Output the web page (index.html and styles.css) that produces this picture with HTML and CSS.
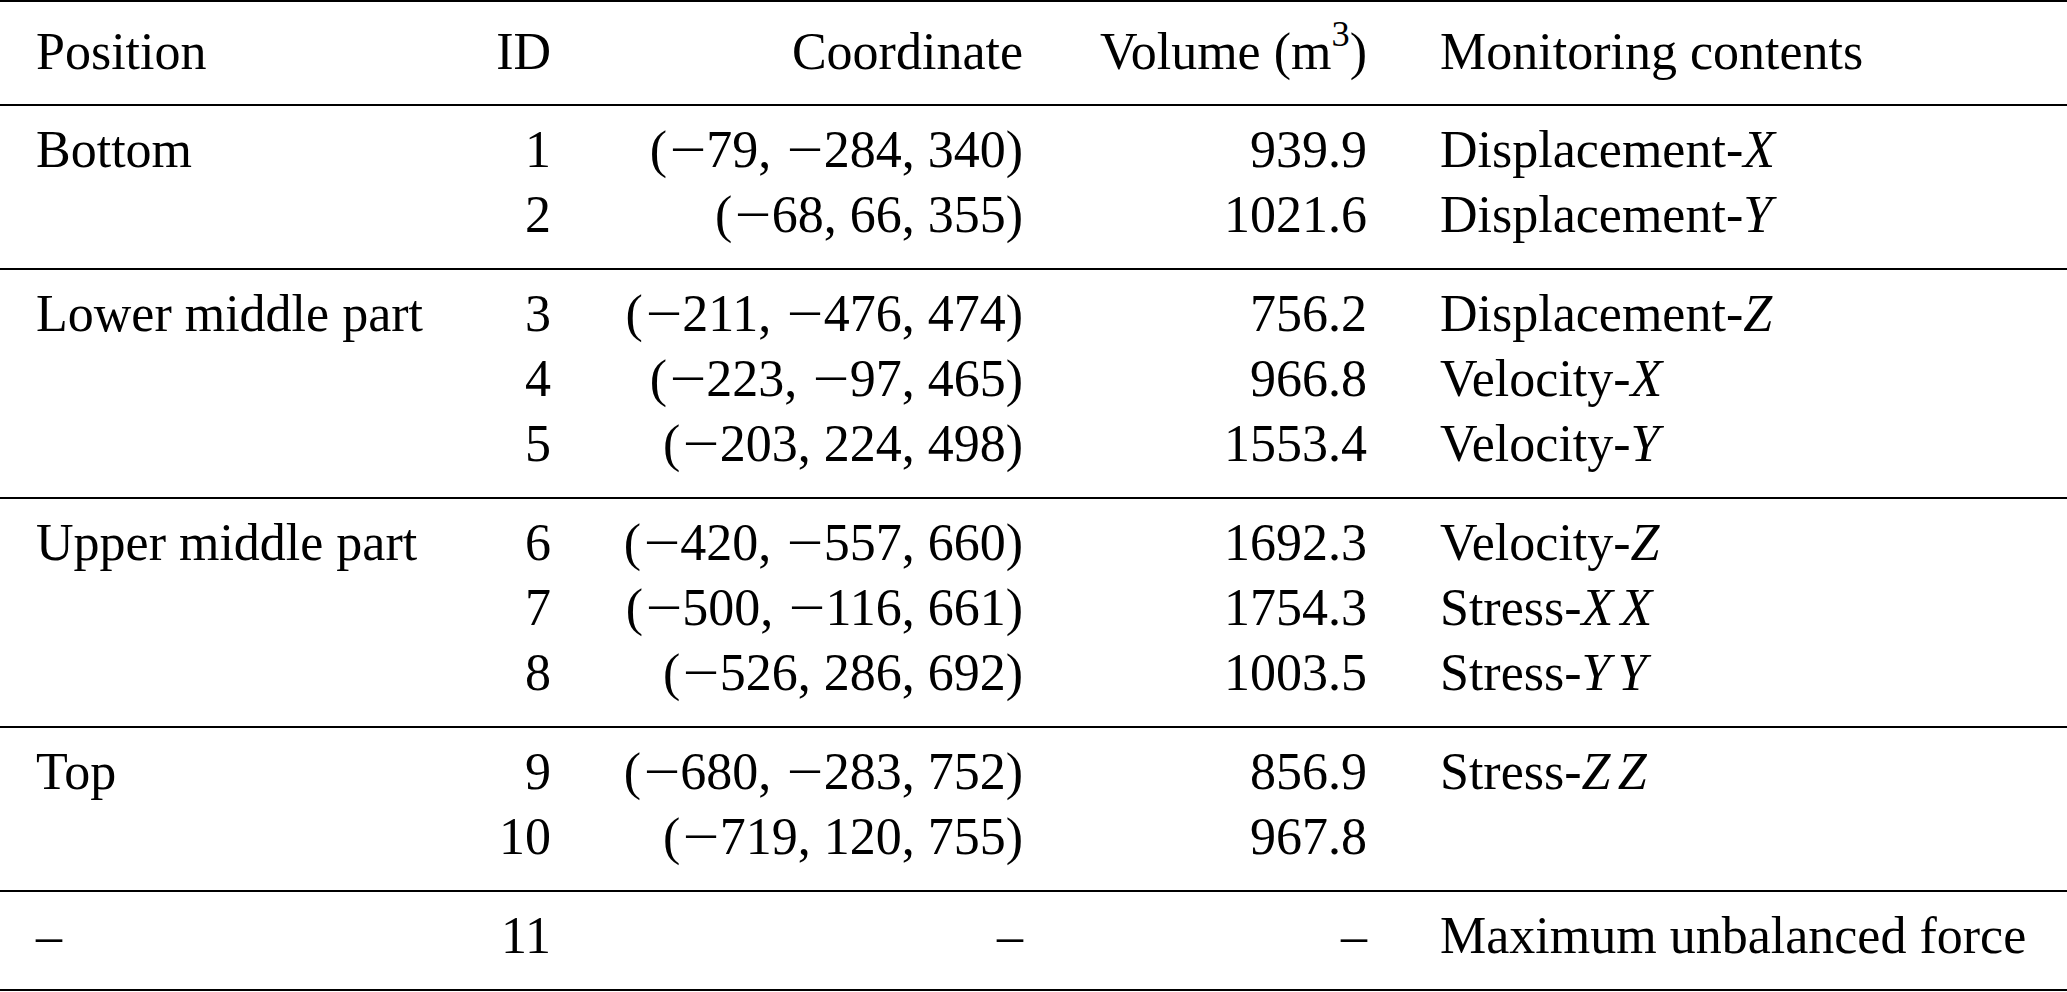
FILE: index.html
```html
<!DOCTYPE html>
<html lang="en">
<head>
<meta charset="utf-8">
<title>Monitoring points</title>
<link rel="stylesheet" href="styles.css">
</head>
<body>
<div class="table">
  <div class="group head">
    <div class="row">
      <span class="pos">Position</span>
      <span class="num">ID</span>
      <span class="num">Coordinate</span>
      <span class="num">Volume (m<sup>3</sup>)</span>
      <span class="mon">Monitoring contents</span>
    </div>
  </div>
  <div class="group">
    <div class="row">
      <span class="pos">Bottom</span>
      <span class="num">1</span>
      <span class="num">(<span class="neg">−</span>79, <span class="neg">−</span>284, 340)</span>
      <span class="num">939.9</span>
      <span class="mon">Displacement-<i>X</i></span>
    </div>
    <div class="row">
      <span class="pos"></span>
      <span class="num">2</span>
      <span class="num">(<span class="neg">−</span>68, 66, 355)</span>
      <span class="num">1021.6</span>
      <span class="mon">Displacement-<i>Y</i></span>
    </div>
  </div>
  <div class="group">
    <div class="row">
      <span class="pos">Lower middle part</span>
      <span class="num">3</span>
      <span class="num">(<span class="neg">−</span>211, <span class="neg">−</span>476, 474)</span>
      <span class="num">756.2</span>
      <span class="mon">Displacement-<i>Z</i></span>
    </div>
    <div class="row">
      <span class="pos"></span>
      <span class="num">4</span>
      <span class="num">(<span class="neg">−</span>223, <span class="neg">−</span>97, 465)</span>
      <span class="num">966.8</span>
      <span class="mon">Velocity-<i>X</i></span>
    </div>
    <div class="row">
      <span class="pos"></span>
      <span class="num">5</span>
      <span class="num">(<span class="neg">−</span>203, 224, 498)</span>
      <span class="num">1553.4</span>
      <span class="mon">Velocity-<i>Y</i></span>
    </div>
  </div>
  <div class="group">
    <div class="row">
      <span class="pos">Upper middle part</span>
      <span class="num">6</span>
      <span class="num">(<span class="neg">−</span>420, <span class="neg">−</span>557, 660)</span>
      <span class="num">1692.3</span>
      <span class="mon">Velocity-<i>Z</i></span>
    </div>
    <div class="row">
      <span class="pos"></span>
      <span class="num">7</span>
      <span class="num">(<span class="neg">−</span>500, <span class="neg">−</span>116, 661)</span>
      <span class="num">1754.3</span>
      <span class="mon">Stress-<i class="pair">XX</i></span>
    </div>
    <div class="row">
      <span class="pos"></span>
      <span class="num">8</span>
      <span class="num">(<span class="neg">−</span>526, 286, 692)</span>
      <span class="num">1003.5</span>
      <span class="mon">Stress-<i class="pair">YY</i></span>
    </div>
  </div>
  <div class="group">
    <div class="row">
      <span class="pos">Top</span>
      <span class="num">9</span>
      <span class="num">(<span class="neg">−</span>680, <span class="neg">−</span>283, 752)</span>
      <span class="num">856.9</span>
      <span class="mon">Stress-<i class="pair">ZZ</i></span>
    </div>
    <div class="row">
      <span class="pos"></span>
      <span class="num">10</span>
      <span class="num">(<span class="neg">−</span>719, 120, 755)</span>
      <span class="num">967.8</span>
      <span class="mon"></span>
    </div>
  </div>
  <div class="group">
    <div class="row">
      <span class="pos">–</span>
      <span class="num">11</span>
      <span class="num">–</span>
      <span class="num">–</span>
      <span class="mon">Maximum unbalanced force</span>
    </div>
  </div>
</div>
</body>
</html>
```

FILE: styles.css
```css
html, body {
  margin: 0;
  padding: 0;
  background: #ffffff;
}

body {
  font-family: "Liberation Serif", "Times New Roman", serif;
  color: #000000;
  font-size: 52px;
}

.table {
  width: 2067px;
  border-top: 2px solid #000;
}

.group {
  padding: 11px 0 21px;
  border-bottom: 2px solid #000;
}

.group.head {
  padding: 17px 0 20px;
}

.row {
  display: grid;
  grid-template-columns: 436px 79px 472px 344px 1fr;
  padding: 0 39px 0 36px;
  height: 65px;
  line-height: 65px;
  white-space: nowrap;
}

.pos {
  text-align: left;
}

.num {
  text-align: right;
}

.neg {
  display: inline-block;
  transform: scaleX(1.25);
  padding: 0 4px 0 6px;
}

.mon {
  text-align: left;
  padding-left: 73px;
}

i {
  font-style: italic;
}

i.pair {
  letter-spacing: 0.14em;
}

sup {
  font-size: 0.7em;
  line-height: 0;
  vertical-align: 0.62em;
}
```
